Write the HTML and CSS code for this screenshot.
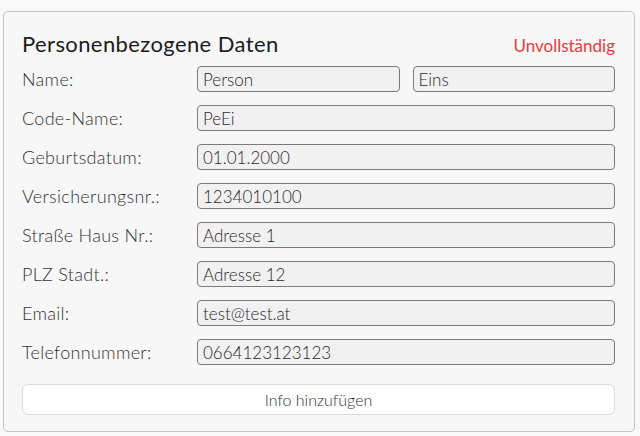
FILE: index.html
```html
<!DOCTYPE html>
<html lang="de">
<head>
<meta charset="utf-8">
<title>Personenbezogene Daten</title>
<link rel="stylesheet" href="styles.css">
</head>
<body>
<section class="card">
  <header class="card-head">
    <h2 class="title">Personenbezogene Daten</h2>
    <span class="status">Unvollständig</span>
  </header>
  <div class="form">
    <label class="label">Name:</label>
    <div class="pair">
      <input class="field" value="Person">
      <input class="field" value="Eins">
    </div>
    <label class="label">Code-Name:</label>
    <input class="field" value="PeEi">
    <label class="label">Geburtsdatum:</label>
    <input class="field" value="01.01.2000">
    <label class="label">Versicherungsnr.:</label>
    <input class="field" value="1234010100">
    <label class="label">Straße Haus Nr.:</label>
    <input class="field" value="Adresse 1">
    <label class="label">PLZ Stadt.:</label>
    <input class="field" value="Adresse 12">
    <label class="label">Email:</label>
    <input class="field" value="test@test.at">
    <label class="label">Telefonnummer:</label>
    <input class="field" value="0664123123123">
  </div>
  <button class="add-btn" type="button">Info hinzufügen</button>
</section>
</body>
</html>
```
FILE: styles.css
```css
* { box-sizing: border-box; }
html, body { margin: 0; padding: 0; }
body {
  background: #f9f9f9;
  font-family: "Lato", "Open Sans", sans-serif;
  font-weight: 300;
  color: #333;
  padding: 11px 5px 0 3px;
}
.card {
  background: #f7f7f7;
  border: 1px solid #c4c4c4;
  border-radius: 5px;
  padding: 18px 19px 15px 18px;
  height: 421px;
}
.card-head {
  display: flex;
  justify-content: space-between;
  align-items: baseline;
  height: 28px;
  margin-bottom: 8px;
}
.title {
  margin: 0;
  font-size: 22px;
  font-weight: 400;
  letter-spacing: 0.4px;
  color: #1c1c1c;
  line-height: 28px;
}
.status {
  font-size: 17px;
  color: #ec3a40;
  font-weight: 400;
}
.form {
  display: grid;
  grid-template-columns: 175px 1fr;
  row-gap: 13px;
  align-items: center;
}
.label {
  font-size: 18px;
  letter-spacing: 0.3px;
  color: #333;
}
.pair {
  display: grid;
  grid-template-columns: 1fr 1fr;
  column-gap: 13px;
}
.field {
  display: block;
  width: 100%;
  height: 26px;
  background: #f1f1f1;
  border: 1px solid #7a7a7a;
  border-radius: 4px;
  padding: 0 5px;
  font-family: inherit;
  font-weight: 300;
  font-size: 17px;
  color: #2a2a2a;
}
.add-btn {
  display: block;
  width: 100%;
  height: 31px;
  margin-top: 19px;
  background: #ffffff;
  border: 1px solid #dcdcdc;
  border-radius: 6px;
  font-family: inherit;
  font-weight: 300;
  font-size: 16px;
  color: #333;
}
```
